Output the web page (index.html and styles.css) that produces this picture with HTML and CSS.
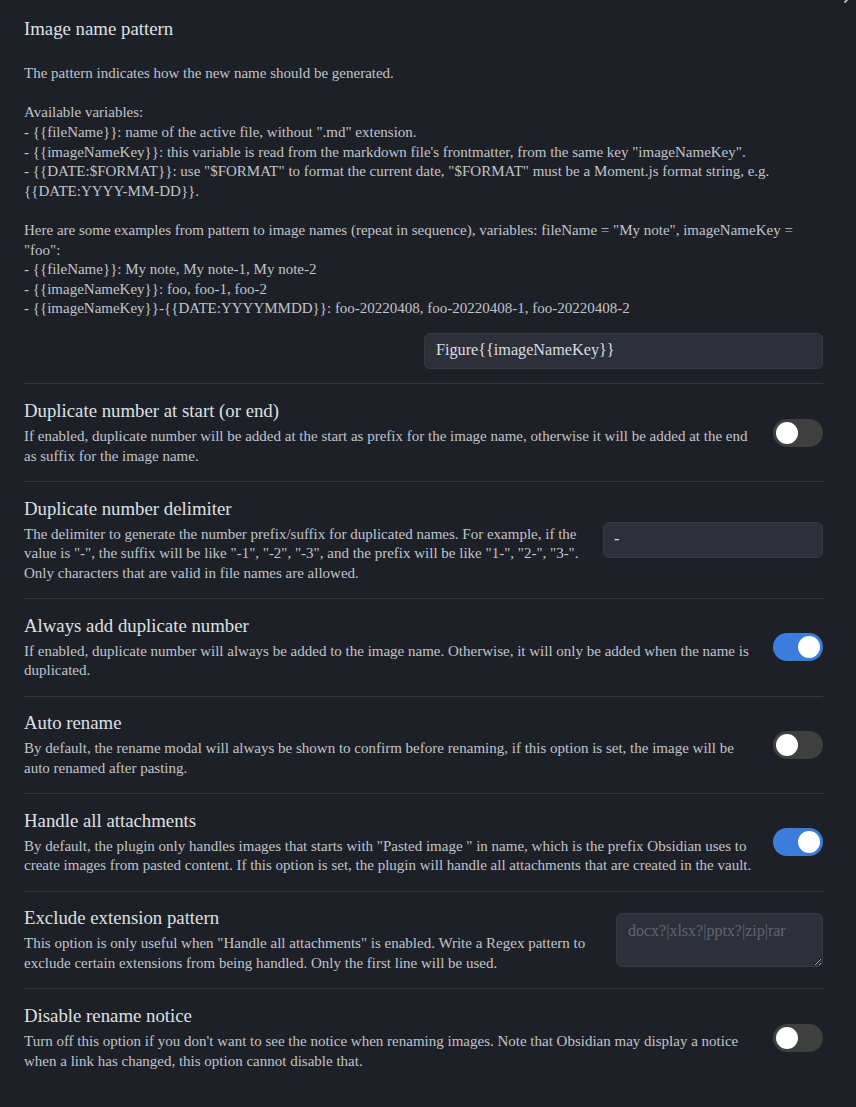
FILE: index.html
```html
<!DOCTYPE html>
<html>
<head>
<meta charset="utf-8">
<link rel="stylesheet" href="styles.css">
</head>
<body>
<div class="close-btn"><svg width="20" height="20" viewBox="0 0 20 20"><path d="M3 3 L17 17 M17 3 L3 17" stroke="#b8bcc4" stroke-width="1.8" stroke-linecap="round" fill="none"/></svg></div>
<div class="settings">
  <div class="setting-item first">
    <div class="info wide">
      <div class="name">Image name pattern</div>
      <div class="desc"><br>The pattern indicates how the new name should be generated.<br><br>Available variables:<br>- {{fileName}}: name of the active file, without ".md" extension.<br>- {{imageNameKey}}: this variable is read from the markdown file's frontmatter, from the same key "imageNameKey".<br>- {{DATE:$FORMAT}}: use "$FORMAT" to format the current date, "$FORMAT" must be a Moment.js format string, e.g. {{DATE:YYYY-MM-DD}}.<br><br>Here are some examples from pattern to image names (repeat in sequence), variables: fileName = "My note", imageNameKey = "foo":<br>- {{fileName}}: My note, My note-1, My note-2<br>- {{imageNameKey}}: foo, foo-1, foo-2<br>- {{imageNameKey}}-{{DATE:YYYYMMDD}}: foo-20220408, foo-20220408-1, foo-20220408-2</div>
    </div>
    <div class="control-row">
      <input class="text-input w399" type="text" value="Figure{{imageNameKey}}">
    </div>
  </div>

  <div class="setting-item">
    <div class="info">
      <div class="name">Duplicate number at start (or end)</div>
      <div class="desc">If enabled, duplicate number will be added at the start as prefix for the image name, otherwise it will be added at the end as suffix for the image name.</div>
    </div>
    <div class="toggle"><span class="knob"></span></div>
  </div>

  <div class="setting-item">
    <div class="info">
      <div class="name">Duplicate number delimiter</div>
      <div class="desc">The delimiter to generate the number prefix/suffix for duplicated names. For example, if the value is "-", the suffix will be like "-1", "-2", "-3", and the prefix will be like "1-", "2-", "3-". Only characters that are valid in file names are allowed.</div>
    </div>
    <input class="text-input w220" type="text" value="-">
  </div>

  <div class="setting-item">
    <div class="info">
      <div class="name">Always add duplicate number</div>
      <div class="desc">If enabled, duplicate number will always be added to the image name. Otherwise, it will only be added when the name is duplicated.</div>
    </div>
    <div class="toggle on"><span class="knob"></span></div>
  </div>

  <div class="setting-item">
    <div class="info">
      <div class="name">Auto rename</div>
      <div class="desc">By default, the rename modal will always be shown to confirm before renaming, if this option is set, the image will be auto renamed after pasting.</div>
    </div>
    <div class="toggle"><span class="knob"></span></div>
  </div>

  <div class="setting-item">
    <div class="info">
      <div class="name">Handle all attachments</div>
      <div class="desc">By default, the plugin only handles images that starts with "Pasted image " in name, which is the prefix Obsidian uses to create images from pasted content. If this option is set, the plugin will handle all attachments that are created in the vault.</div>
    </div>
    <div class="toggle on"><span class="knob"></span></div>
  </div>

  <div class="setting-item">
    <div class="info">
      <div class="name">Exclude extension pattern</div>
      <div class="desc">This option is only useful when "Handle all attachments" is enabled. Write a Regex pattern to exclude certain extensions from being handled. Only the first line will be used.</div>
    </div>
    <textarea class="text-area" placeholder="docx?|xlsx?|pptx?|zip|rar"></textarea>
  </div>

  <div class="setting-item">
    <div class="info">
      <div class="name">Disable rename notice</div>
      <div class="desc">Turn off this option if you don't want to see the notice when renaming images. Note that Obsidian may display a notice when a link has changed, this option cannot disable that.</div>
    </div>
    <div class="toggle"><span class="knob"></span></div>
  </div>
</div>
</body>
</html>
```

FILE: styles.css
```css
html, body {
  margin: 0;
  padding: 0;
  background: #1e2027;
  font-family: "Liberation Serif", "Times New Roman", serif;
  overflow: hidden;
}

.close-btn {
  position: absolute;
  top: -15px;
  right: -6px;
  width: 20px;
  height: 20px;
}

.settings {
  padding: 2px 33px 0 24px;
}

.setting-item {
  display: flex;
  align-items: center;
  gap: 20px;
  padding: 14.7px 0;
  border-top: 1px solid #34373e;
}

.setting-item.first {
  display: block;
  border-top: none;
  padding-bottom: 14.7px;
}

.info {
  flex: 1 1 auto;
  min-width: 0;
}

.info.wide {
  margin-right: 24px;
}

.name {
  font-size: 18.8px;
  line-height: 24px;
  color: #dfe0e2;
}

.desc {
  padding-top: 4px;
  font-size: 15px;
  line-height: 19.6px;
  color: #c0c4cb;
}

.control-row {
  display: flex;
  justify-content: flex-end;
  margin-top: 13.6px;
}

.text-input {
  box-sizing: border-box;
  height: 36px;
  padding: 0 11px;
  background: #2e3039;
  border: 1px solid #363943;
  border-radius: 6px;
  color: #dcdde0;
  font-family: "Liberation Serif", "Times New Roman", serif;
  font-size: 16.2px;
  outline: none;
  flex: 0 0 auto;
}

.w399 { width: 399px; }
.w220 { width: 220px; padding-left: 10px; }

.text-area {
  box-sizing: border-box;
  flex: 0 0 207px;
  width: 207px;
  height: 54px;
  padding: 7px 11px;
  background: #2e3039;
  border: 1px solid #363943;
  border-radius: 6px;
  color: #dcdde0;
  font-family: "Liberation Serif", "Times New Roman", serif;
  font-size: 16px;
  line-height: 20px;
  outline: none;
  resize: vertical;
}

.text-area::placeholder {
  color: #5e6571;
}

.toggle {
  flex: 0 0 50px;
  width: 50px;
  height: 28px;
  border-radius: 14px;
  background: #3f3f40;
  position: relative;
  box-sizing: border-box;
}

.toggle .knob {
  position: absolute;
  top: 3px;
  left: 3px;
  width: 22px;
  height: 22px;
  border-radius: 50%;
  background: #ffffff;
}

.toggle.on {
  background: #3a7ddc;
}

.toggle.on .knob {
  left: 25px;
}
```
